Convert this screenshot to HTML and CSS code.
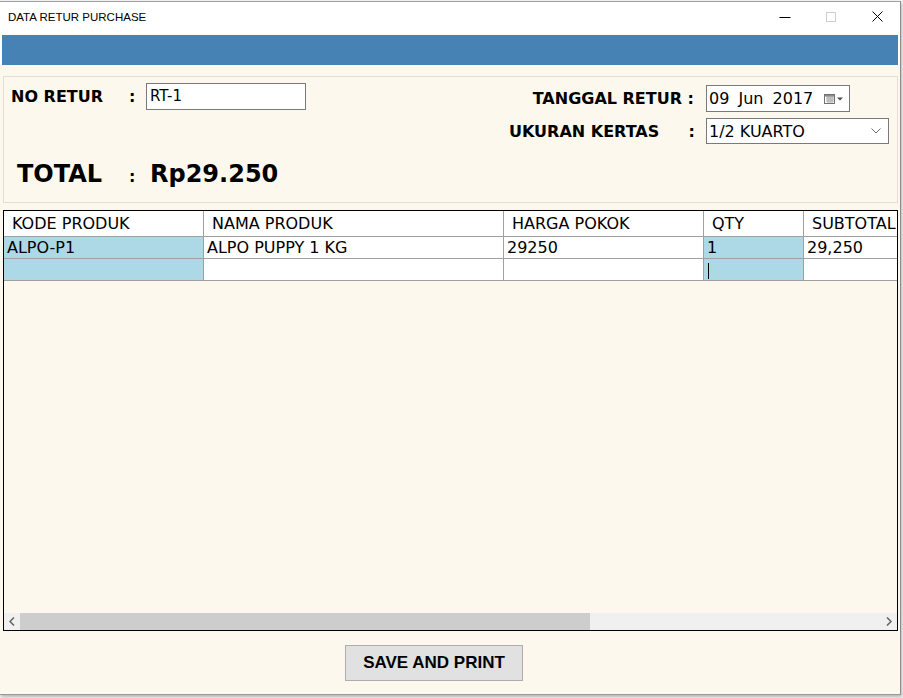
FILE: index.html
```html
<!DOCTYPE html>
<html>
<head>
<meta charset="utf-8">
<link rel="stylesheet" href="styles.css">
</head>
<body>
<div class="window">
  <div class="titlebar">
    <span class="title">DATA RETUR PURCHASE</span>
    <div class="controls">
      <div class="ctl"><svg width="12" height="10" viewBox="0 0 12 10"><path d="M0.5 5.5H11.5" stroke="#000" stroke-width="1"/></svg></div>
      <div class="ctl"><svg width="10" height="10" viewBox="0 0 10 10"><rect x="0.5" y="0.5" width="9" height="9" fill="none" stroke="#cfcfcf"/></svg></div>
      <div class="ctl"><svg width="11" height="11" viewBox="0 0 11 11"><path d="M0.5 0.5L10.5 10.5M10.5 0.5L0.5 10.5" stroke="#000" stroke-width="1"/></svg></div>
    </div>
  </div>
  <div class="bluebar"></div>
  <div class="content">
    <div class="groupbox">
      <div class="left">
        <div class="row-noretur">
          <span class="lbl lbl-noretur">NO RETUR</span>
          <span class="lbl colon">:</span>
          <div class="textbox">RT-1</div>
        </div>
        <div class="row-total">
          <span class="total-lbl">TOTAL</span>
          <span class="total-colon">:</span>
          <span class="total-val">Rp29.250</span>
        </div>
      </div>
      <div class="right">
        <div class="rrow">
          <span class="lbl rlabel rlabel-date">TANGGAL RETUR :</span>
          <div class="datebox">
            <span class="datetext">09 Jun 2017</span>
            <svg class="calicon" width="20" height="10" viewBox="0 0 20 10">
              <rect x="0.5" y="0.5" width="10" height="9" fill="#fff" stroke="#707070"/>
              <path d="M2 3h8M2 5h8M2 7h8M4 2v7M6 2v7M8 2v7" stroke="#a8a8a8" stroke-width="1"/>
              <rect x="1" y="1" width="9" height="1.5" fill="#8a8a8a"/>
              <path d="M13 3.5h6l-3 3z" fill="#4a4a4a"/>
            </svg>
          </div>
        </div>
        <div class="rrow">
          <span class="lbl rlabel rlabel-ukuran"><span>UKURAN KERTAS</span><span>:</span></span>
          <div class="combobox">
            <span>1/2 KUARTO</span>
            <svg width="10" height="6" viewBox="0 0 10 6"><path d="M0.5 0.5L5 5L9.5 0.5" fill="none" stroke="#707070" stroke-width="1"/></svg>
          </div>
        </div>
      </div>
    </div>

    <div class="grid">
      <div class="gtable">
        <div class="gh">KODE PRODUK</div>
        <div class="gh">NAMA PRODUK</div>
        <div class="gh">HARGA POKOK</div>
        <div class="gh">QTY</div>
        <div class="gh">SUBTOTAL</div>

        <div class="gc blue">ALPO-P1</div>
        <div class="gc">ALPO PUPPY 1 KG</div>
        <div class="gc">29250</div>
        <div class="gc blue">1</div>
        <div class="gc">29,250</div>

        <div class="gc blue"></div>
        <div class="gc"></div>
        <div class="gc"></div>
        <div class="gc blue"><span class="caret"></span></div>
        <div class="gc"></div>
      </div>
      <div class="gspacer"></div>
      <div class="hscroll">
        <div class="sbtn"><svg width="6" height="9" viewBox="0 0 6 9"><path d="M5 0.5L1 4.5L5 8.5" fill="none" stroke="#606060" stroke-width="1.5"/></svg></div>
        <div class="track"><div class="thumb"></div></div>
        <div class="sbtn"><svg width="6" height="9" viewBox="0 0 6 9"><path d="M1 0.5L5 4.5L1 8.5" fill="none" stroke="#606060" stroke-width="1.5"/></svg></div>
      </div>
    </div>

    <div class="footer">
      <button class="savebtn">SAVE AND PRINT</button>
    </div>
  </div>
</div>
</body>
</html>
```

FILE: styles.css
```css
html, body {
  margin: 0;
  padding: 0;
}
body {
  background: #f4f4f4;
  width: 903px;
  height: 698px;
  overflow: hidden;
}
.window {
  width: 900px;
  height: 692px;
  margin-top: 1px;
  border-top: 1px solid #a0a0a0;
  border-right: 1px solid #8c8c8c;
  border-bottom: 1px solid #9a9a9a;
  background: #fff;
  display: flex;
  flex-direction: column;
  box-shadow: 1px 2px 3px rgba(0,0,0,0.25);
}
.titlebar {
  height: 29px;
  padding-bottom: 4px;
  display: flex;
  align-items: center;
  background: #fff;
  font-family: "Liberation Sans", Arial, sans-serif;
  font-size: 11.5px;
  color: #000;
}
.title {
  padding-left: 8px;
  flex: 1;
}
.controls {
  display: flex;
  height: 29px;
}
.ctl {
  width: 46px;
  display: flex;
  align-items: center;
  justify-content: center;
}
.bluebar {
  height: 30px;
  margin: 0 2px;
  background: #4682b4;
}
.content {
  flex: 1;
  background: #fdf8ee;
  padding: 11px 2px 0 3px;
  display: flex;
  flex-direction: column;
  font-family: "DejaVu Sans", Verdana, sans-serif;
  color: #000;
}
.groupbox {
  height: 125px;
  border: 1px solid #e4ded3;
  display: flex;
  justify-content: space-between;
}
.left {
  display: flex;
  flex-direction: column;
}
.lbl {
  font-weight: bold;
  font-size: 16px;
}
.row-noretur {
  display: flex;
  align-items: center;
  padding-top: 6px;
  padding-left: 7px;
}
.lbl-noretur {
  width: 118px;
  flex-shrink: 0;
}
.colon {
  width: 17px;
  flex-shrink: 0;
}
.textbox {
  width: 155px;
  height: 25px;
  line-height: 25px;
  border: 1px solid #7a7a7a;
  background: #fff;
  font-size: 15px;
  padding-left: 3px;
  box-sizing: content-box;
}
.row-total {
  display: flex;
  align-items: baseline;
  padding-left: 13px;
  margin-top: 50px;
  font-weight: bold;
}
.total-lbl {
  font-size: 24px;
  width: 112px;
}
.total-colon {
  font-size: 16px;
  width: 21px;
}
.total-val {
  font-size: 24px;
}
.right {
  display: flex;
  flex-direction: column;
  gap: 6px;
  padding-top: 8px;
  padding-right: 8px;
}
.rrow {
  display: flex;
  align-items: center;
}
.rlabel {
  width: 197px;
  box-sizing: border-box;
}
.rlabel-date {
  text-align: right;
  padding-right: 12px;
}
.rlabel-ukuran {
  display: flex;
  justify-content: space-between;
  padding-right: 11px;
}
.datebox {
  width: 140px;
  height: 25px;
  border: 1px solid #7a7a7a;
  background: #fff;
  display: flex;
  align-items: center;
  padding-left: 2px;
  font-size: 16px;
}
.datetext {
  word-spacing: 4px;
  flex: 1;
}
.calicon {
  margin-right: 5px;
}
.combobox {
  width: 172px;
  height: 24px;
  border: 1px solid #7a7a7a;
  background: #fff;
  display: flex;
  align-items: center;
  justify-content: space-between;
  padding-left: 2px;
  padding-right: 7px;
  font-size: 16px;
}
.grid {
  margin-top: 7px;
  height: 419px;
  border: 1px solid #000;
  display: flex;
  flex-direction: column;
  overflow: hidden;
}
.gtable {
  display: grid;
  grid-template-columns: 200px 300px 200px 100px 120px;
  grid-template-rows: 26px 22px 22px;
  font-size: 16px;
}
.gh {
  background: #fff;
  border-right: 1px solid #a0a0a0;
  border-bottom: 1px solid #a0a0a0;
  padding-left: 8px;
  line-height: 26px;
  white-space: nowrap;
}
.gc {
  background: #fff;
  border-right: 1px solid #a0a0a0;
  border-bottom: 1px solid #a0a0a0;
  padding-left: 3px;
  line-height: 22px;
  white-space: nowrap;
}
.gc.blue {
  background: #add8e6;
}
.caret {
  display: inline-block;
  width: 1px;
  height: 16px;
  background: #000;
  vertical-align: middle;
  margin-left: 1px;
}
.gspacer {
  flex: 1;
}
.hscroll {
  height: 17px;
  display: flex;
  background: #f0f0f0;
}
.sbtn {
  width: 16px;
  display: flex;
  align-items: center;
  justify-content: center;
}
.track {
  flex: 1;
  display: flex;
}
.thumb {
  width: 570px;
  background: #cdcdcd;
}
.footer {
  padding-top: 14px;
  padding-left: 342px;
}
.savebtn {
  width: 178px;
  height: 36px;
  background: #e1e1e1;
  border: 1px solid #adadad;
  font-family: "Liberation Sans", Arial, sans-serif;
  font-weight: bold;
  font-size: 17px;
  color: #000;
  padding: 0;
}
```
